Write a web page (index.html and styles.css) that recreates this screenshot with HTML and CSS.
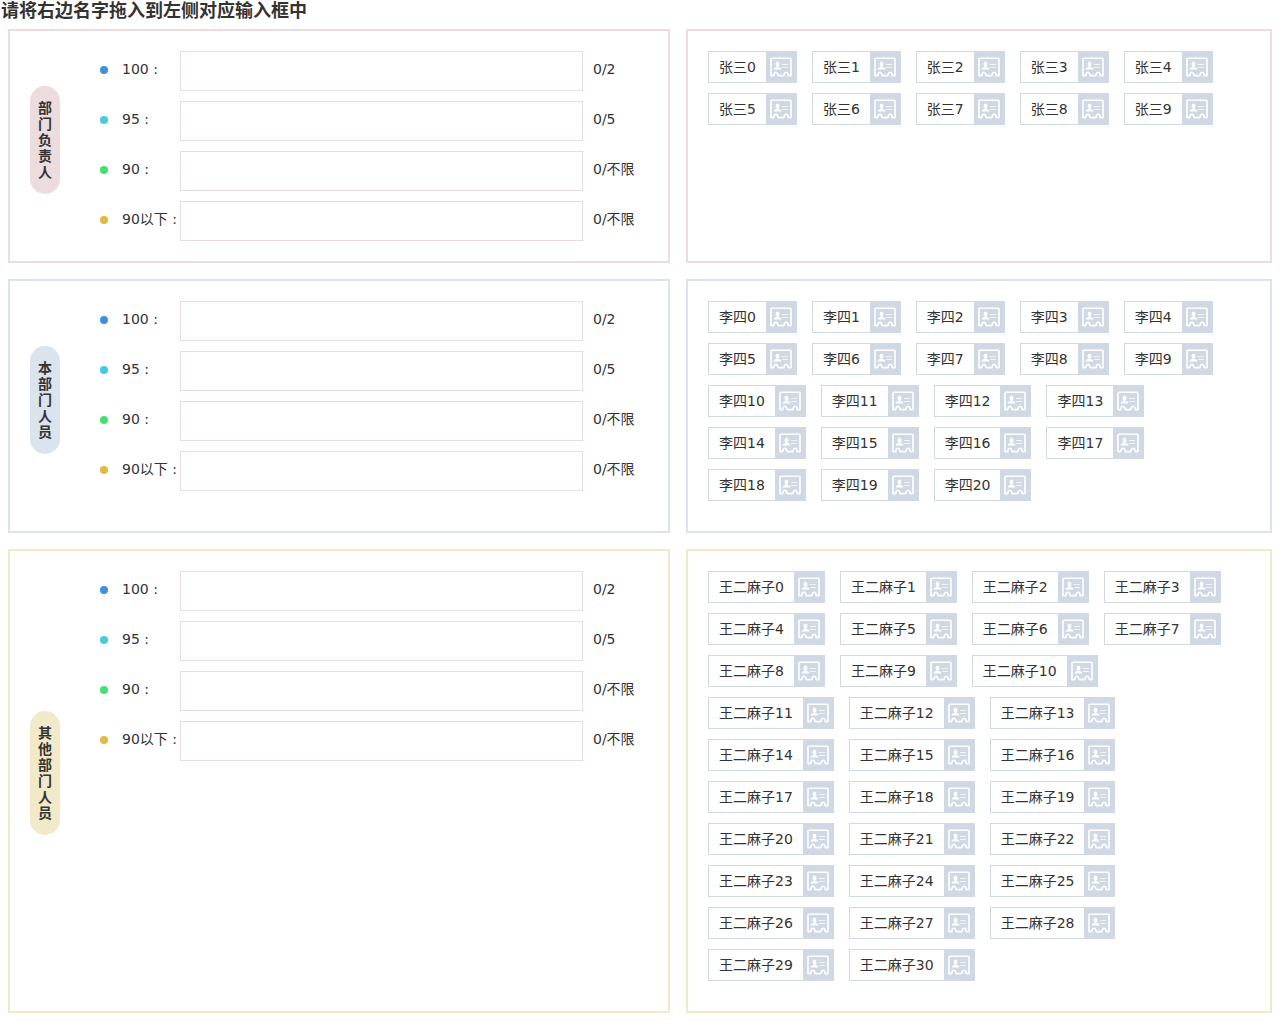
FILE: index.html
```html
<!DOCTYPE html>
<html lang="zh-CN">
<head>
<meta charset="utf-8">
<meta name="viewport" content="width=device-width, initial-scale=1">
<title>请将右边名字拖入到左侧对应输入框中</title>
<link rel="stylesheet" href="styles.css">
</head>
<body>
<svg class="sprite" aria-hidden="true">
  <symbol id="card" viewBox="0 0 22 20">
    <path d="M1.8 1.2H20.2Q21 1.2 21 2V18.6H18.3Q17.9 15.2 16.2 15.2T13.8 18.6H8.2Q7.5 15.2 5.8 15.2T3.7 18.6H1V2Q1 1.2 1.8 1.2Z" fill="none" stroke="#fff" stroke-width="1.6" stroke-linejoin="round"/>
    <ellipse cx="7.5" cy="7" rx="2" ry="2.5" fill="#fff"/>
    <path d="M6.7 9H8.3V10Q11.4 10.3 11.4 12.5H3.6Q3.7 10.3 6.7 10Z" fill="#fff"/>
    <path d="M12 7.5H18M12 10.5H18" fill="none" stroke="#fff" stroke-opacity=".7" stroke-width="1"/>
  </symbol>
</svg>
<h1 class="title">请将右边名字拖入到左侧对应输入框中</h1>
<main class="groups">
  <section class="group group--pink" data-name="张三" data-count="10">
    <div class="panel panel--score">
      <h2 class="tag">部门负责人</h2>
      <ul class="scores"></ul>
    </div>
    <div class="panel panel--names"></div>
  </section>
  <section class="group group--blue" data-name="李四" data-count="21">
    <div class="panel panel--score">
      <h2 class="tag">本部门人员</h2>
      <ul class="scores"></ul>
    </div>
    <div class="panel panel--names"></div>
  </section>
  <section class="group group--yellow" data-name="王二麻子" data-count="31">
    <div class="panel panel--score">
      <h2 class="tag tag--long">其他部门人员</h2>
      <ul class="scores"></ul>
    </div>
    <div class="panel panel--names"></div>
  </section>
</main>
<script src="app.js"></script>
</body>
</html>
```
FILE: styles.css
```css
* {
  box-sizing: border-box;
}

body {
  margin: 0;
  background: #fff;
  color: #333;
  font: 14px/20px "DejaVu Sans", "Noto Sans CJK SC", sans-serif;
}

.sprite {
  position: absolute;
  width: 0;
  height: 0;
}

.title {
  margin: 0;
  padding-left: 1px;
  font-size: 18px;
  line-height: 21px;
}

.groups {
  display: grid;
  gap: 16px;
  padding: 8px;
}

.group {
  display: grid;
  grid-template-columns: 331fr 293fr;
  gap: 16px;
}

.group--pink { --tone: #ecdcde; }
.group--blue { --tone: #dbe3ed; }
.group--yellow { --tone: #f1e9c8; }

.panel {
  display: flex;
  border: 2px solid var(--tone);
  padding: 20px;
}

.panel--score {
  gap: 40px;
}

.panel--names {
  flex-wrap: wrap;
  align-content: flex-start;
  gap: 10px 15px;
  padding: 20px 35px 30px 20px;
}

.tag {
  align-self: center;
  flex: none;
  width: 30px;
  margin: 0 0 12px;
  padding: 14px 8px;
  border-radius: 15px;
  background: var(--tone);
  font-size: 14px;
  line-height: 16px;
}

.tag--long {
  margin-bottom: 16px;
}

.scores {
  flex: 1;
  display: flex;
  flex-direction: column;
  gap: 10px;
  margin: 0;
  padding: 0;
  list-style: none;
}

.score {
  display: flex;
  align-items: center;
  height: 40px;
}

.dot {
  width: 8px;
  height: 8px;
  margin: 0 14px 2px 0;
  border-radius: 50%;
}

.dot--1 { background: #3f8fe0; }
.dot--2 { background: #43cbe0; }
.dot--3 { background: #43e072; }
.dot--4 { background: #e0ba43; }

.score__label {
  width: 58px;
  padding-bottom: 4px;
  line-height: 36px;
  white-space: nowrap;
}

.score__input {
  flex: 1;
  min-width: 0;
  height: 40px;
  border: 1px solid #e8dcde;
  padding: 0 10px;
  background: #fff;
  font: inherit;
}

.score__count {
  width: 55px;
  margin-left: 10px;
  padding-bottom: 4px;
  line-height: 36px;
}

.chip {
  display: flex;
  height: 32px;
  border: 1px solid #d0d8e4;
  cursor: move;
}

.chip__name {
  padding: 0 10px;
  line-height: 30px;
}

.chip__icon {
  display: flex;
  align-items: center;
  justify-content: center;
  width: 30px;
  background: #d0d8e4;
}

.chip__icon svg {
  width: 22px;
  height: 20px;
}
```
FILE: app.js
```js
const levels = [
  ["100", "0/2"],
  ["95", "0/5"],
  ["90", "0/不限"],
  ["90以下", "0/不限"],
];

document.querySelectorAll(".group").forEach((group, g) => {
  group.querySelector(".scores").innerHTML = levels.map(([label, count], i) => `
    <li class="score">
      <span class="dot dot--${i + 1}"></span>
      <label class="score__label" for="score-${g}-${i}">${label} :</label>
      <input class="score__input" id="score-${g}-${i}" type="text" readonly>
      <span class="score__count">${count}</span>
    </li>`).join("");

  const { name, count } = group.dataset;
  group.querySelector(".panel--names").innerHTML = Array.from({ length: Number(count) }, (_, i) => `
    <div class="chip" draggable="true">
      <span class="chip__name">${name}${i}</span>
      <span class="chip__icon"><svg aria-hidden="true"><use href="#card"></use></svg></span>
    </div>`).join("");
});
```
